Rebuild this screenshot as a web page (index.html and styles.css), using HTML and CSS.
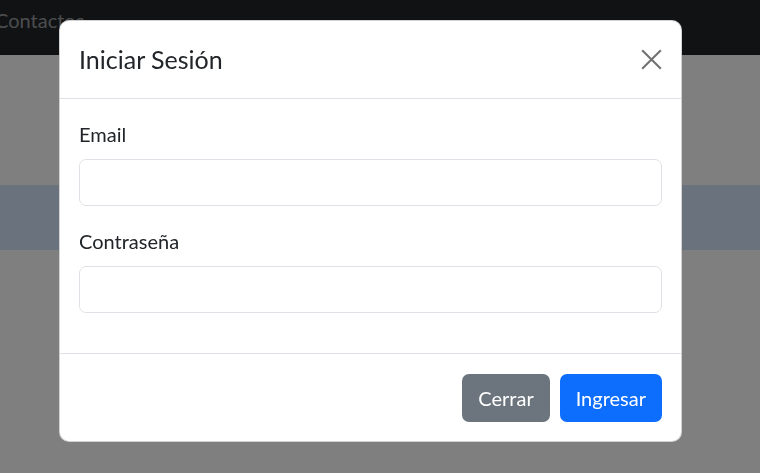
FILE: index.html
```html
<!DOCTYPE html>
<html lang="es">
<head>
<meta charset="utf-8">
<title>Iniciar Sesión</title>
<link rel="stylesheet" href="styles.css">
</head>
<body>
<nav class="navbar">
  <a class="nav-link" href="#">Contactos</a>
</nav>
<main class="page">
  <section class="band"></section>
</main>
<div class="backdrop"></div>
<div class="modal">
  <div class="modal-content">
    <div class="modal-header">
      <h5 class="modal-title">Iniciar Sesión</h5>
      <button class="btn-close" type="button" aria-label="Cerrar">
        <svg viewBox="0 0 16 16" width="23" height="23"><path d="M1.5 1.5 L14.5 14.5 M14.5 1.5 L1.5 14.5" stroke="#000" stroke-width="1.5" fill="none"/></svg>
      </button>
    </div>
    <div class="modal-body">
      <div class="field">
        <label class="form-label" for="email">Email</label>
        <input class="form-control" id="email" type="email">
      </div>
      <div class="field">
        <label class="form-label" for="pass">Contraseña</label>
        <input class="form-control" id="pass" type="password">
      </div>
    </div>
    <div class="modal-footer">
      <button class="btn btn-secondary" type="button">Cerrar</button>
      <button class="btn btn-primary" type="button">Ingresar</button>
    </div>
  </div>
</div>
</body>
</html>
```
FILE: styles.css
```css
* { box-sizing: border-box; }
html, body { margin: 0; height: 100%; }
body {
  font-family: "Lato", "Noto Sans", sans-serif;
  font-size: 20px;
  line-height: 1.5;
  color: #212529;
  background: #fff;
  overflow: hidden;
}
.navbar {
  height: 55px;
  background: #212529;
  display: flex;
  align-items: flex-start;
  padding: 5px 0 0 0;
}
.nav-link {
  color: rgba(255,255,255,.55);
  text-decoration: none;
  font-size: 20px;
  margin-left: -5px;
  line-height: 30px;
}
.page { padding-top: 130px; }
.band { height: 65px; background: #d5e4fb; }
.backdrop {
  position: fixed; inset: 0;
  background: rgba(0,0,0,.5);
}
.modal {
  position: fixed;
  top: 20px;
  left: 59px;
  width: 623px;
}
.modal-content {
  background: #fff;
  border: 1px solid rgba(0,0,0,.175);
  border-radius: 10px;
  display: flex;
  flex-direction: column;
  overflow: hidden;
}
.modal-header {
  display: flex;
  align-items: center;
  padding: 19.5px 19px;
  border-bottom: 1px solid #dee2e6;
}
.modal-title {
  margin: 0;
  font-size: 25px;
  font-weight: 400;
  line-height: 1.5;
  flex: 1;
}
.btn-close {
  border: 0;
  background: transparent;
  opacity: .55;
  padding: 0;
  width: 30px;
  height: 30px;
  margin-right: -4px;
  display: flex;
  align-items: center;
  justify-content: center;
  cursor: pointer;
}
.modal-body { padding: 20px 19px; }
.field { margin-bottom: 20px; }
.form-label { display: block; margin-bottom: 10px; line-height: 30px; }
.form-control {
  display: block;
  width: 100%;
  height: 47px;
  padding: 7px 15px;
  font: inherit;
  border: 1px solid #dee2e6;
  border-radius: 7px;
  background: #fff;
}
.modal-footer {
  display: flex;
  justify-content: flex-end;
  gap: 10px;
  padding: 20px 19px 19px;
  border-top: 1px solid #dee2e6;
}
.btn {
  font: inherit;
  line-height: 30px;
  padding: 8px 15px;
  border: 1px solid transparent;
  border-radius: 7px;
  color: #fff;
  cursor: pointer;
}
.btn-secondary { background: #6c757d; }
.btn-primary { background: #0d6efd; }
```
